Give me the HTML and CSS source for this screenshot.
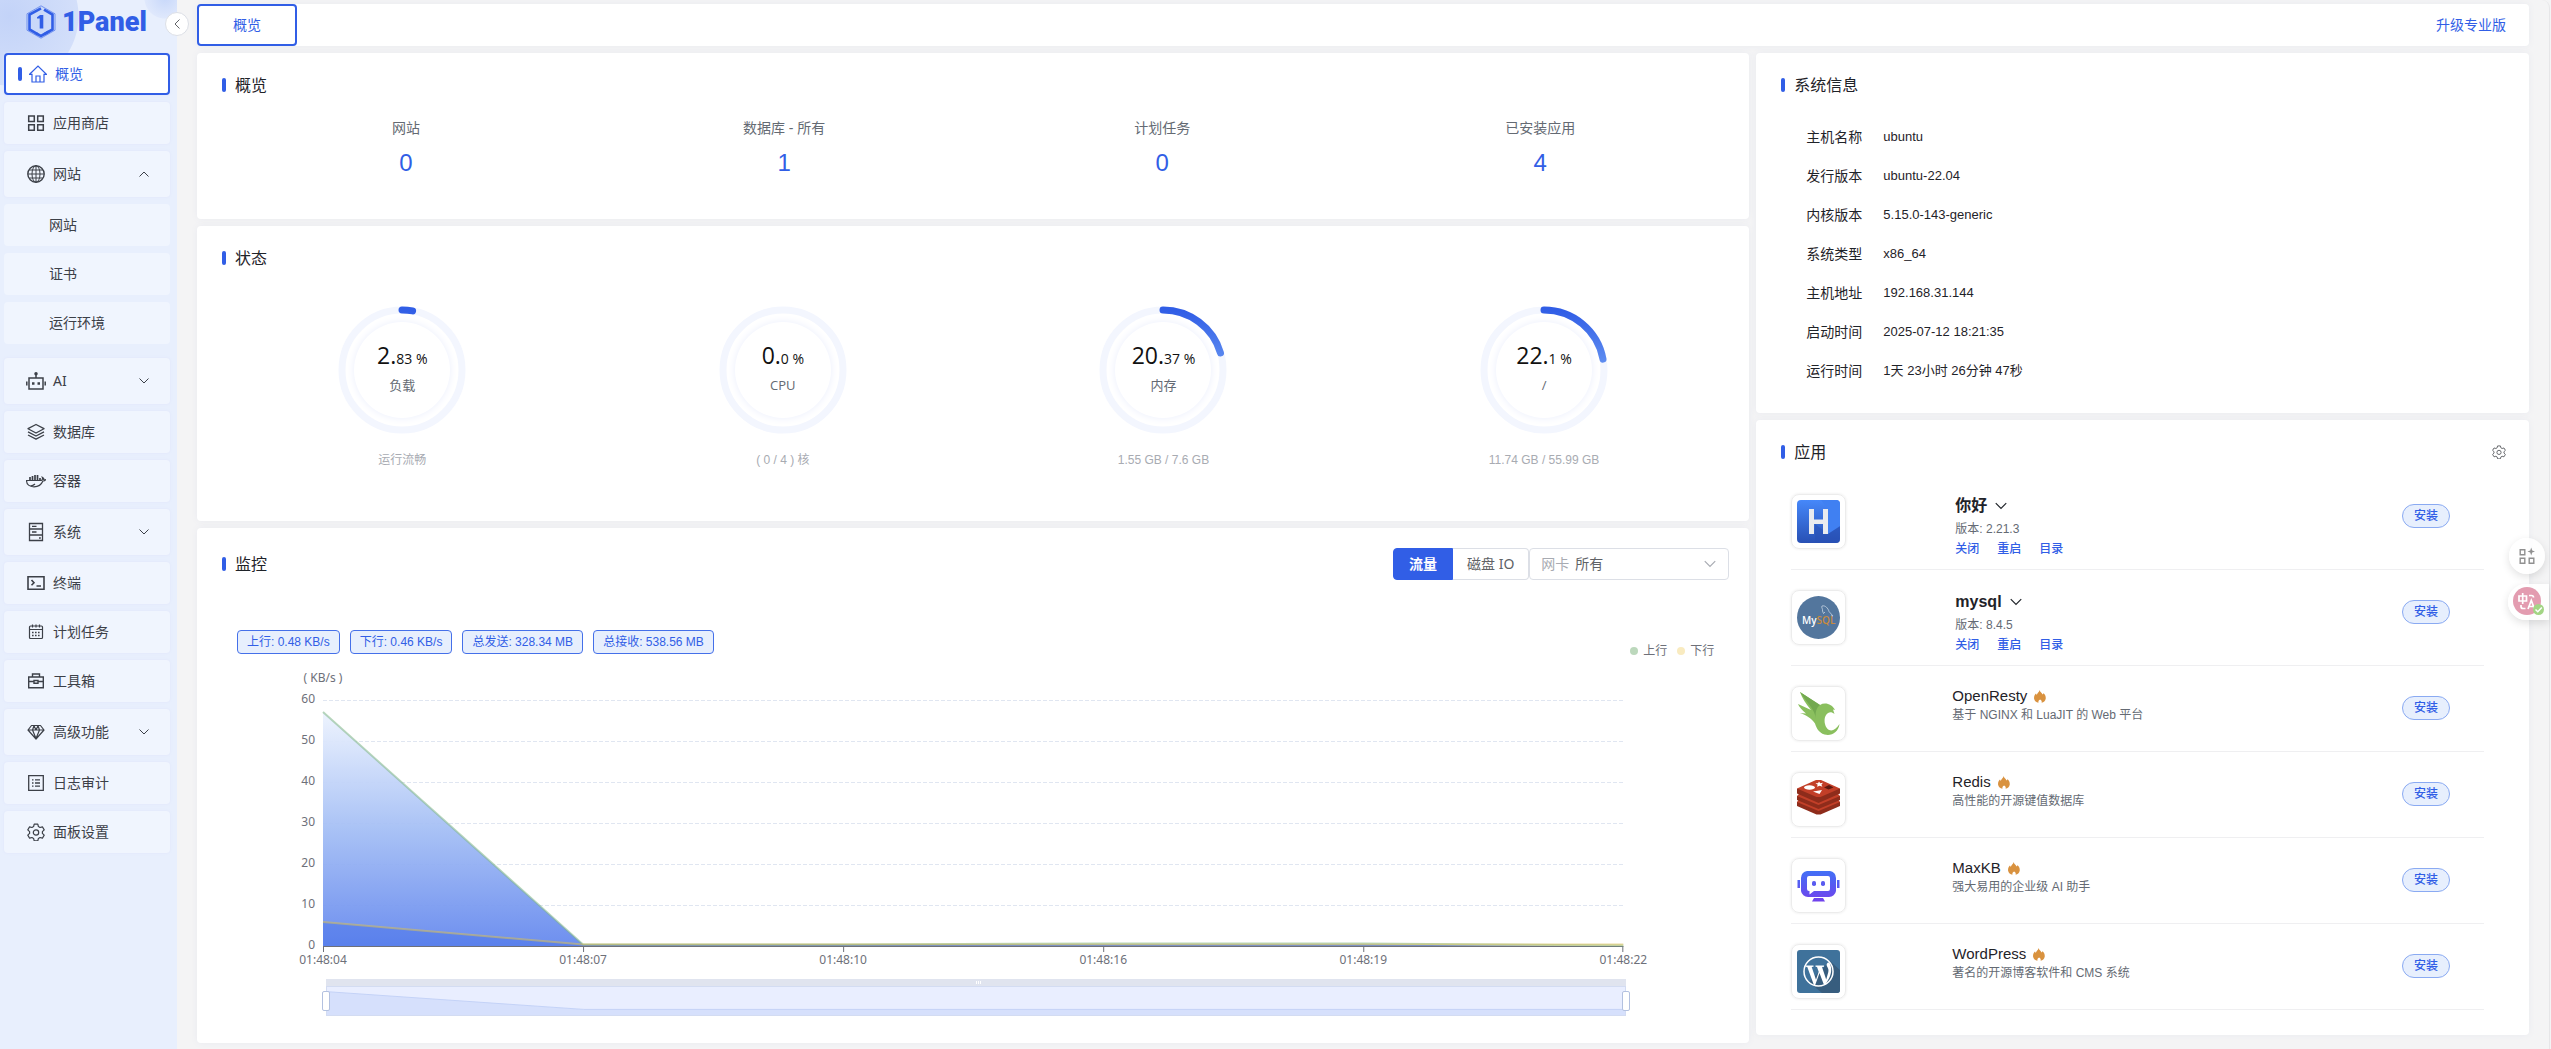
FILE: index.html
```html
<!DOCTYPE html>
<html lang="zh-CN">
<head>
  <meta charset="UTF-8" />
  <title>1Panel</title>
  <link rel="stylesheet" href="styles.css">
</head>
<body>
  <svg class="sprite" xmlns="http://www.w3.org/2000/svg">
    <symbol id="down" viewBox="0 0 12 12"><path d="M1.500 3.500 6 8l4.500-4.500" fill="none" stroke="currentColor"/></symbol>
    <symbol id="gear" viewBox="0 0 18 18"><path d="M7.200 1.200h3.600l.6 2.400 1.600.9 2.400-.7 1.800 3.100-1.800 1.700v1.800l1.800 1.700-1.800 3.100-2.400-.7-1.600.9-.6 2.400H7.200l-.6-2.400-1.600-.9-2.400.7-1.800-3.100 1.800-1.700V8.600L.8 6.900l1.800-3.100 2.400.7 1.600-.9z" fill="none" stroke="currentColor" stroke-width="1.200" stroke-linejoin="round"/><circle cx="9" cy="9.500" r="2.700" fill="none" stroke="currentColor" stroke-width="1.200"/></symbol>
    <symbol id="fire" viewBox="0 0 12 13"><path d="M5.600 0c.2 2 2.300 2.400 2.900 4.600l1.100-1.400C11.200 4.600 12 6.600 11.700 8.800c-.4 2.200-2 3.600-4.100 3.900.4-1.300 0-2.300-1.500-3.200-1.500.9-2 1.900-1.600 3.200C2.200 12.300.5 10.900.1 8.700-.2 6.500.8 4.800 2 3.600l.8 1.300C3.100 3 5.300 2.200 5.600 0z" fill="#d9923f"/></symbol>
  </svg>

  <aside class="sidebar">
    <a class="logo" href="#">
      <svg width="30" height="34" viewBox="0 0 30 34" fill="none" stroke="#315ee6">
        <path d="M15 .8 29 8.800v16.400l-14 8-14-8V8.800z" stroke-width=".8" opacity=".7"/>
        <path d="m18 4.600 8.500 5v14.800L18 29.400M12 29.400l-8.500-5V9.600L15 3.300" stroke-width="2.600"/>
        <path d="M11 12.200 14 10h3.300v13.500h-3.600V13.500H11z" fill="#315ee6" stroke="none"/>
        <path d="m10 28.300 5 2.700 8-4.600" stroke-width="2.600"/>
      </svg>
      <span>1Panel</span>
    </a>
    <nav class="menu">
      <a class="item active" href="#"><i class="bar"></i>
        <svg width="18" height="18" viewBox="0 0 18 18" fill="none" stroke="currentColor" stroke-width="1.200"><path d="M.6 9.300 9 1l8.400 8.300H15V17H3V9.300zM7 17v-6h4v6"/></svg>概览</a>
      <a class="item" href="#"><svg width="18" height="18" viewBox="0 0 18 18" fill="none" stroke="currentColor" stroke-width="1.500"><path d="M1.700 2h5.600v5.500H1.700zM10.700 2h5.600v5.500h-5.600zM1.700 10.700h5.600v5.500H1.700zM10.700 10.700h5.600v5.500h-5.600z"/></svg>应用商店</a>
      <a class="item parent" href="#"><svg width="18" height="18" viewBox="0 0 18 18" fill="none" stroke="currentColor"><circle cx="9" cy="9" r="8.200" stroke-width="1.400"/><ellipse cx="9" cy="9" rx="4" ry="8.200"/><path d="M9 1v16M1 9h16M2.200 5h13.600M2.200 13h13.600"/></svg>网站<svg class="arrow up" width="12" height="12"><use href="#down"/></svg></a>
      <div class="submenu">
        <a class="item" href="#">网站</a>
        <a class="item" href="#">证书</a>
        <a class="item" href="#">运行环境</a>
      </div>
      <a class="item parent" href="#"><svg width="20" height="18" viewBox="0 0 20 18" fill="none" stroke="currentColor" stroke-width="1.500"><path d="M3 6h14v11H3zM10 6V1.500M.8 9.500v4M19.200 9.500v4"/><circle cx="10" cy="1.800" r="1" fill="currentColor"/><path d="M6 11.500h2.500M11.500 11.500H14" stroke-width="2.400"/></svg>AI<svg class="arrow" width="12" height="12"><use href="#down"/></svg></a>
      <a class="item" href="#"><svg width="18" height="18" viewBox="0 0 18 18" fill="none" stroke="currentColor" stroke-width="1.300" stroke-linejoin="round"><path d="m9 1.500 8 4.200-8 4.300-8-4.300zM1 8.800l8 4.200 8-4.200M1 12l8 4.200 8-4.200"/></svg>数据库</a>
      <a class="item" href="#"><svg width="20" height="18" viewBox="0 0 20 18" fill="none" stroke="currentColor"><path d="M.6 8.500h14.800c1.200-.7 1.400-2 .9-3.300 1.200.5 1.500 1.600 1.400 2.100.9-.1 1.600 0 2 .4-.7 1-1.700 1.400-2.800 1.300-1.600 3.800-4.500 5.800-8.900 5.800C3.500 14.800.4 12.500.6 8.500zM4 14c2.500-.1 4-.9 5-2" stroke-width="1.200"/><path d="M4 5v3M6.500 4v4M9 3v5M11.500 3v5M14 6v2" stroke-width="1.700"/></svg>容器</a>
      <a class="item parent" href="#"><svg width="18" height="20" viewBox="0 0 18 20" fill="none" stroke="currentColor" stroke-width="1.300"><path d="M2.500 1.500h13v17h-13zM2.500 7h13M2.500 13h13M5 4.300h4.500M5 10h4.500M12 16h1.800"/></svg>系统<svg class="arrow" width="12" height="12"><use href="#down"/></svg></a>
      <a class="item" href="#"><svg width="18" height="18" viewBox="0 0 18 18" fill="none" stroke="currentColor" stroke-width="1.600"><path d="M1 2.700h16v12.600H1zM4.500 6 7 8.700l-2.500 2.600M9.500 12H14"/></svg>终端</a>
      <a class="item" href="#"><svg width="18" height="18" viewBox="0 0 18 18" fill="none" stroke="currentColor" stroke-width="1.200"><rect x="2.500" y="3" width="13" height="12.500" rx="1"/><path d="M2.500 6.500h13M5.500 1.500v3M9 1.500v3M12.500 1.500v3"/><path d="M5 9.500h8.500M5 12.500h8.500" stroke-width="1.500" stroke-dasharray="1.600 1.400"/></svg>计划任务</a>
      <a class="item" href="#"><svg width="18" height="18" viewBox="0 0 18 18" fill="none" stroke="currentColor" stroke-width="1.400"><path d="M1.700 5h14.600v10.800H1.700zM5.500 5V2h7v3M1.700 9.500H7M11 9.500h5.300M7 8.500h4v2.700H7z"/></svg>工具箱</a>
      <a class="item parent" href="#"><svg width="18" height="18" viewBox="0 0 18 18" fill="none" stroke="currentColor" stroke-width="1.200" stroke-linejoin="round"><path d="M4.500 2.500h9L17 7l-8 9L1 7zM1 7h16M5.500 7 9 15.500 12.500 7M5.500 7l1.500-4.300L9 7l2-4.300L12.500 7"/></svg>高级功能<svg class="arrow" width="12" height="12"><use href="#down"/></svg></a>
      <a class="item" href="#"><svg width="18" height="18" viewBox="0 0 18 18" fill="none" stroke="currentColor" stroke-width="1.300"><path d="M1.700 1.700h14.600v14.600H1.700zM5 5.800h1.500M8 5.800h5M5 9h1.500M8 9h5M5 12.200h1.500M8 12.200h5"/></svg>日志审计</a>
      <a class="item" href="#"><svg width="18" height="18"><use href="#gear"/></svg>面板设置</a>
    </nav>
    <button class="collapse" aria-label="收起"><svg width="12" height="12"><use href="#down"/></svg></button>
  </aside>

  <main>
    <header class="topbar">
      <a class="tab" href="#">概览</a>
      <a class="upgrade" href="#">升级专业版</a>
    </header>

    <div class="row">
      <div class="col wide">
        <section class="card overview">
          <h2>概览</h2>
          <div class="stats">
            <div><span>网站</span><a href="#">0</a></div>
            <div><span>数据库 - 所有</span><a href="#">1</a></div>
            <div><span>计划任务</span><a href="#">0</a></div>
            <div><span>已安装应用</span><a href="#">4</a></div>
          </div>
        </section>

        <section class="card status">
          <h2>状态</h2>
          <svg class="sprite">
            <defs><linearGradient id="arc" x1="0" y1="5" x2="0" y2="70" gradientUnits="userSpaceOnUse"><stop offset="0" stop-color="#315ee6"/><stop offset="1" stop-color="#6a99f3"/></linearGradient></defs>
          </svg>
          <div class="gauges">
            <div class="gauge">
              <div class="dial">
                <svg width="128" height="128" viewBox="0 0 128 128"><circle class="track" cx="64" cy="64" r="60"/><path class="arc" d="M64 4A60 60 0 0 1 74.600 4.900"/></svg>
                <div class="inner"><p class="value">2.<small>83 %</small></p><p class="name">负载</p></div>
              </div>
              <p class="note">运行流畅</p>
            </div>
            <div class="gauge">
              <div class="dial">
                <svg width="128" height="128" viewBox="0 0 128 128"><circle class="track" cx="64" cy="64" r="60"/></svg>
                <div class="inner"><p class="value">0.<small>0 %</small></p><p class="name">CPU</p></div>
              </div>
              <p class="note">( 0 / 4 ) 核</p>
            </div>
            <div class="gauge">
              <div class="dial">
                <svg width="128" height="128" viewBox="0 0 128 128"><circle class="track" cx="64" cy="64" r="60"/><path class="arc" d="M64 4A60 60 0 0 1 121.500 46.900"/></svg>
                <div class="inner"><p class="value">20.<small>37 %</small></p><p class="name">内存</p></div>
              </div>
              <p class="note">1.55 GB / 7.6 GB</p>
            </div>
            <div class="gauge">
              <div class="dial">
                <svg width="128" height="128" viewBox="0 0 128 128"><circle class="track" cx="64" cy="64" r="60"/><path class="arc" d="M64 4A60 60 0 0 1 123 53.100"/></svg>
                <div class="inner"><p class="value">22.<small>1 %</small></p><p class="name">/</p></div>
              </div>
              <p class="note">11.74 GB / 55.99 GB</p>
            </div>
          </div>
        </section>

        <section class="card monitor">
          <div class="card-head">
            <h2>监控</h2>
            <div class="tools">
              <button class="seg on">流量</button><button class="seg">磁盘 IO</button>
              <div class="picker">
                <label for="nic">网卡</label>
                <select id="nic"><option>所有</option></select>
                <svg width="14" height="14"><use href="#down"/></svg>
              </div>
            </div>
          </div>
          <div class="summary">
            <div class="tags">
              <span class="tag">上行: 0.48 KB/s</span>
              <span class="tag">下行: 0.46 KB/s</span>
              <span class="tag">总发送: 328.34 MB</span>
              <span class="tag">总接收: 538.56 MB</span>
            </div>
            <div class="legend"><span class="up">上行</span><span class="dn">下行</span></div>
          </div>
          <div class="chart">
            <p class="unit">( KB/s )</p>
            <div class="plot">
              <div class="ylabels"><span>60</span><span>50</span><span>40</span><span>30</span><span>20</span><span>10</span><span>0</span></div>
              <svg viewBox="0 0 1300 252" preserveAspectRatio="none">
                <defs><linearGradient id="area" x1="0" y1="12" x2="0" y2="246" gradientUnits="userSpaceOnUse"><stop offset="0" stop-color="#edf3fe"/><stop offset=".5" stop-color="#a5bff5"/><stop offset="1" stop-color="#6689ee"/></linearGradient></defs>
                <path class="grid" d="M0 .5H1300M0 41.500H1300M0 82.500H1300M0 123.500H1300M0 164.500H1300M0 205.500H1300"/>
                <path d="M0 12 260 244.500H1040L1300 246.500H0z" fill="url(#area)" opacity=".95"/>
                <path d="M0 222 260 244.500H1040L1300 246.500H0z" fill="#3f6be8" opacity=".4"/>
                <path class="axis" d="M0 246.500H1300M.5 246V252M260.500 246V252M520.500 246V252M780.500 246V252M1040.500 246V252M1299.500 246V252"/>
                <path class="line" d="M0 12 260 244.500 520 244.500 780 243.500 1040 243.500 1300 245.500" stroke="#7fb686"/>
                <path class="line" d="M0 222 260 244.500 520 244.500 1300 244.500" stroke="#d9c15a"/>
              </svg>
            </div>
            <div class="xlabels"><span>01:48:04</span><span>01:48:07</span><span>01:48:10</span><span>01:48:16</span><span>01:48:19</span><span>01:48:22</span></div>
            <div class="zoombar">
              <i class="grip"></i>
              <svg viewBox="0 0 1300 30" preserveAspectRatio="none"><path d="M0 5 257 24H1300V30H0z" fill="#d6e0fc"/><path d="M0 5 257 24H1300" fill="none" stroke="#c3d1f7"/></svg>
              <i class="handle left"></i><i class="handle right"></i>
            </div>
          </div>
        </section>
      </div>

      <div class="col narrow">
        <section class="card system">
          <h2>系统信息</h2>
          <table>
            <tr><th>主机名称</th><td>ubuntu</td></tr>
            <tr><th>发行版本</th><td>ubuntu-22.04</td></tr>
            <tr><th>内核版本</th><td>5.15.0-143-generic</td></tr>
            <tr><th>系统类型</th><td>x86_64</td></tr>
            <tr><th>主机地址</th><td>192.168.31.144</td></tr>
            <tr><th>启动时间</th><td>2025-07-12 18:21:35</td></tr>
            <tr><th>运行时间</th><td>1天 23小时 26分钟 47秒</td></tr>
          </table>
        </section>

        <section class="card apps">
          <div class="card-head">
            <h2>应用</h2>
            <button class="config" aria-label="设置"><svg width="14" height="14"><use href="#gear"/></svg></button>
          </div>
          <ul>
            <li class="installed">
              <div class="app-icon">
                <svg width="43" height="43" viewBox="0 0 43 43">
                  <defs><linearGradient id="halo" x1="0" y1="0" x2="0" y2="1"><stop offset="0" stop-color="#4688fa"/><stop offset="1" stop-color="#2850b4"/></linearGradient></defs>
                  <rect width="43" height="43" rx="4" fill="url(#halo)"/>
                  <path d="M31 9V34L43 26V4a4 4 0 0 0-4-4H24z" fill="#4080f2"/>
                  <path d="M18 24 31 34 43 26.500V39a4 4 0 0 1-4 4H18z" fill="#2850b4" opacity=".55"/>
                  <path d="M12 9h5v10.500h9V9h5v25h-5V24h-9v10h-5z" fill="#e9ebef"/>
                </svg>
              </div>
              <div class="app-text">
                <h3>你好<svg width="14" height="14"><use href="#down"/></svg></h3>
                <p>版本: 2.21.3</p>
                <div class="links"><a href="#">关闭</a><a href="#">重启</a><a href="#">目录</a></div>
              </div>
              <button class="install">安装</button>
            </li>
            <li class="installed">
              <div class="app-icon">
                <svg width="43" height="43" viewBox="0 0 43 43">
                  <circle cx="21.500" cy="21.500" r="21.500" fill="#53769d"/>
                  <path d="M25 10c3-1 6 2 7 5.500l4 4.500-2-.2M25 10c-1 1.500 1 2.500.5 5l1 2.500 1.500-1.500" fill="none" stroke="#c5d3e2" stroke-width=".8"/>
                  <text x="5" y="28" class="mysql-text">My<tspan fill="#c98a3d">SQL</tspan></text>
                </svg>
              </div>
              <div class="app-text">
                <h3>mysql<svg width="14" height="14"><use href="#down"/></svg></h3>
                <p>版本: 8.4.5</p>
                <div class="links"><a href="#">关闭</a><a href="#">重启</a><a href="#">目录</a></div>
              </div>
              <button class="install">安装</button>
            </li>
            <li>
              <div class="app-icon">
                <svg width="43" height="43" viewBox="0 0 43 43">
                  <path d="M3 0 23 13c5-3 12-1 15 5l-2-.5 1.500 4.500c-6-5-11.500 2-9.500 10 2 8 9 9 14.500 0-1 8-8 12.500-15 10.500-6-2-8-6.500-9.500-11C14 26 9 23 3 21l6 .5C5 18 2 15 1 12l13 6C9 12 5 6 3 0z" fill="#8abf5e"/>
                  <path d="M3 0l20 13c-4 3-5 8-4 14C18 17 9 10 3 0z" fill="#73a950"/>
                </svg>
              </div>
              <div class="app-text">
                <h4>OpenResty<svg width="12" height="13"><use href="#fire"/></svg></h4>
                <p>基于 NGINX 和 LuaJIT 的 Web 平台</p>
              </div>
              <button class="install">安装</button>
            </li>
            <li>
              <div class="app-icon">
                <svg width="43" height="43" viewBox="0 0 43 43">
                  <path d="M0 24v4l19.500 8.500h4L43 28v-4z" fill="#8e2c1b"/><path d="M0 24l21.500 9L43 24l-3-4H3z" fill="#c23f28"/>
                  <path d="M0 18v4l21.500 9L43 22v-4z" fill="#8e2c1b"/><path d="M0 18l21.500 9L43 18l-3-3H3z" fill="#c23f28"/>
                  <path d="M0 10.500v5L21.500 25 43 15.500v-5z" fill="#8e2c1b"/><path d="M0 10.500 19 2h5l19 8.500L23.500 19h-4z" fill="#c23f28"/>
                  <ellipse cx="12.500" cy="9.500" rx="5.500" ry="2.200" fill="#fff"/>
                  <path d="m22 3.500 1.200 1.700 2.800-.4-1.600 2 1 2-2.700-1-2.700 1 .7-2L18.500 5l2.500.2zM16 13.500l9-1.500-2.500 4z" fill="#fff"/><path d="m27 9.500 5-2.500 4.500 2.500-5 2z" fill="#5e190f"/>
                </svg>
              </div>
              <div class="app-text">
                <h4>Redis<svg width="12" height="13"><use href="#fire"/></svg></h4>
                <p>高性能的开源键值数据库</p>
              </div>
              <button class="install">安装</button>
            </li>
            <li>
              <div class="app-icon">
                <svg width="43" height="43" viewBox="0 0 43 43">
                  <defs><linearGradient id="kb" x1="0" y1="0" x2="0" y2="1"><stop offset="0" stop-color="#4270f6"/><stop offset="1" stop-color="#7142ec"/></linearGradient></defs>
                  <path d="M10 7h23a7 7 0 0 1 6 7v13a7 7 0 0 1-7 6H11a7 7 0 0 1-7-6V14a7 7 0 0 1 6-7zM.5 16H3v8H.5zM40 16h2.500v8H40zM17 34h9l2 3.500H15z" fill="url(#kb)"/>
                  <path d="M12 12h19a2 2 0 0 1 2 2v11a2 2 0 0 1-2 2H17L12.500 30.500V27H12a2 2 0 0 1-2-2V14a2 2 0 0 1 2-2z" fill="#fff"/>
                  <rect x="15" y="17" width="4" height="5" rx="1.800" fill="#5a5cf0"/><rect x="24" y="17" width="4" height="5" rx="1.800" fill="#5a5cf0"/>
                </svg>
              </div>
              <div class="app-text">
                <h4>MaxKB<svg width="12" height="13"><use href="#fire"/></svg></h4>
                <p>强大易用的企业级 AI 助手</p>
              </div>
              <button class="install">安装</button>
            </li>
            <li>
              <div class="app-icon">
                <svg width="43" height="43" viewBox="0 0 43 43">
                  <rect width="43" height="43" rx="3" fill="#3f729b"/>
                  <path d="M33 11 43 20v20a3 3 0 0 1-3 3H25L12 32z" fill="#375d7e"/>
                  <circle cx="21.500" cy="21.500" r="14.500" fill="none" stroke="#fff" stroke-width="1.500"/>
                  <path d="M8.500 15.500h8v1.300l-1.800.3 4.300 12.700 2.700-8-1.700-4.700-1.500-.3v-1.300h8.500v1.300l-2 .3 4.200 12.500 2-7c1-3.500-.8-5-1.500-7-.5-2 1-3.500 2.500-3 2.500 4 3 9 0 15.500l-4 7h-1.200l-4.500-12-4.300 12h-1.300L10.300 17l-1.800-.2z" fill="#fff"/>
                </svg>
              </div>
              <div class="app-text">
                <h4>WordPress<svg width="12" height="13"><use href="#fire"/></svg></h4>
                <p>著名的开源博客软件和 CMS 系统</p>
              </div>
              <button class="install">安装</button>
            </li>
          </ul>
        </section>
      </div>
    </div>
  </main>

  <div class="floating">
    <button class="quick" aria-label="工具"><svg width="16" height="18" viewBox="0 0 16 18" fill="none" stroke="#909090" stroke-width="1.400"><path d="M1.200 2.700h4.600v5H1.200zM1.200 11.300h4.600v5H1.200zM10.200 11.300h4.600v5h-4.600z"/><path d="m12.200.5 1 3 2.800 1-2.800 1-1 3-1-3-2.700-1 2.700-1z" fill="#909090" stroke="none"/></svg></button>
    <button class="translate" aria-label="翻译">
      <svg width="32" height="30" viewBox="0 0 32 30">
        <circle cx="14" cy="14" r="14" fill="#e39cb0"/>
        <path d="M6 9h7.500v5H6zM9.700 6v11M16 8.500h2.500a2 2 0 0 1 2 2M8 18v1.500a2 2 0 0 0 2 2h2.500M15 22l3.300-8.500L21.500 22M16 19.500h4.500" fill="none" stroke="#fff" stroke-width="1.700"/>
        <circle cx="25.500" cy="22.500" r="5.500" fill="#a3d585"/><path d="m22.500 22.500 2.300 2.300 4-4.200" fill="none" stroke="#fff" stroke-width="1.500"/>
      </svg>
    </button>
  </div>
</body>
</html>
```
FILE: styles.css
```css
* {
  box-sizing: border-box;
}
body {
  margin: 0;
  display: flex;
  min-height: 100vh;
  background: #f4f4f5;
  color: #1f2329;
  font-family: "Liberation Sans", "Noto Sans CJK SC", sans-serif;
  font-size: 14px;
  line-height: 20px;
}
a {
  color: #315ee6;
  text-decoration: none;
}
button {
  font: inherit;
  cursor: pointer;
}
h2, h3, h4, p, ul {
  margin: 0;
  padding: 0;
}
.sprite {
  position: absolute;
  width: 0;
  height: 0;
}

/* sidebar */
.sidebar {
  position: relative;
  flex: 0 0 177px;
  background:
    radial-gradient(circle at 165px -2px, #c8d8fa 0, #dfe8fc 20px, transparent 21px),
    radial-gradient(circle at 9px 16px, #c3d3f8 0, #d3dffa 69px, transparent 70px),
    #e8effd;
}
.logo {
  display: flex;
  align-items: center;
  gap: 6px;
  height: 43px;
  padding-left: 26px;
  font-family: Roboto, sans-serif;
  font-size: 27px;
  font-weight: 900;
}
.menu {
  display: flex;
  flex-direction: column;
  gap: 7px;
  padding: 10px 7px 10px 4px;
}
.item {
  display: flex;
  align-items: center;
  gap: 8px;
  height: 42px;
  padding: 0 20px 0 23px;
  background: #f0f5fe;
  border-radius: 4px;
  box-shadow: 0 0 3px #dfe5fa;
  color: #3c4048;
  font-family: "Noto Sans", "Noto Sans CJK SC", sans-serif;
}
.item svg[width="20"] {
  margin: 0 -1px;
}
.parent {
  height: 46px;
}
.active {
  padding-left: 12px;
  border: 2px solid #315ee6;
  background: #fff;
  color: #315ee6;
}
.bar {
  width: 4px;
  height: 14px;
  border-radius: 2px;
  background: #315ee6;
}
.active .bar {
  margin-right: -1px;
}
.arrow {
  margin-left: auto;
}
.arrow.up {
  transform: rotate(180deg);
}
.submenu {
  display: flex;
  flex-direction: column;
  gap: 7px;
  padding-bottom: 7px;
}
.submenu .item {
  padding-left: 45px;
  box-shadow: none;
}
.collapse {
  position: absolute;
  top: 12px;
  right: -12px;
  width: 24px;
  height: 24px;
  padding: 5px;
  border: 1px solid #dcdfe6;
  border-radius: 50%;
  background: #fff;
  color: #606266;
}
.collapse svg {
  display: block;
  transform: rotate(90deg);
}

/* main */
main {
  flex: 1;
  min-width: 0;
  margin-right: 1px;
  padding: 4px 20px 6px;
  border-right: 1px solid #e6e6e8;
  border-radius: 0 8px 0 0;
}
.topbar {
  display: flex;
  align-items: center;
  justify-content: space-between;
  height: 42px;
  padding-right: 23px;
  background: #fff;
  border-radius: 4px;
  box-shadow: 0 0 6px #e9eaf0;
}
.tab {
  width: 100px;
  height: 42px;
  border: 2px solid #315ee6;
  border-radius: 4px;
  line-height: 38px;
  text-align: center;
}
.row {
  display: flex;
  align-items: flex-start;
  margin: 7px -7px 0 0;
}
.col {
  display: flex;
  flex-direction: column;
  gap: 7px;
  min-width: 0;
  padding-right: 7px;
}
.wide {
  width: calc(100% * 2 / 3);
}
.narrow {
  width: calc(100% / 3);
}
.card {
  padding: 20px;
  background: #fff;
  border-radius: 4px;
  box-shadow: 0 0 6px #e9eaf0;
}
.card-head {
  display: flex;
  align-items: center;
  justify-content: space-between;
}
h2 {
  display: flex;
  align-items: center;
  gap: 9px;
  height: 24px;
  padding: 2px 0 0 5px;
  font-size: 16px;
  font-weight: 400;
}
h2::before {
  content: "";
  width: 4px;
  height: 14px;
  margin-bottom: 2px;
  border-radius: 2px;
  background: #315ee6;
}

.overview {
  padding-bottom: 40px;
}
.stats, .gauges {
  display: grid;
  grid-template-columns: repeat(4, 1fr);
  text-align: center;
}
.stats {
  margin-top: 21px;
}
.stats span {
  display: block;
  margin-bottom: 9px;
  color: #646a73;
}
.stats a {
  display: block;
  font-size: 24px;
  line-height: 32px;
}

.status {
  padding-bottom: 51px;
}
.gauges {
  margin: 36px -5px 0;
}
.dial {
  display: grid;
  place-items: center;
}
.dial > * {
  grid-area: 1 / 1;
}
.track, .arc {
  fill: none;
  stroke: #f3f6fe;
  stroke-width: 7;
}
.arc {
  stroke: url(#arc);
  stroke-linecap: round;
}
.inner {
  width: 96px;
  height: 96px;
  padding-top: 17px;
  border-radius: 50%;
  box-shadow: 0 0 7px 1px #eff2fd;
  font-family: "Open Sans", "Noto Sans CJK SC", sans-serif;
}
.value {
  font-size: 23px;
  line-height: 32px;
  color: #111;
}
.value small {
  font-size: 14px;
}
.name {
  font-size: 13px;
  color: #646a73;
}
.note {
  margin-top: 16px;
  font-size: 12px;
  color: #a8abb2;
}

/* monitor */
.monitor {
  padding-bottom: 27px;
}
.tools {
  display: flex;
  height: 32px;
  font-family: "Noto Sans", "Noto Sans CJK SC", sans-serif;
}
.seg {
  padding: 0 14px;
  border: 1px solid #dcdfe6;
  border-left: 0;
  border-radius: 0 4px 4px 0;
  background: #fff;
  color: #606266;
}
.seg.on {
  padding: 0 15px;
  border: 1px solid #315ee6;
  border-radius: 4px 0 0 4px;
  background: #315ee6;
  color: #fff;
  font-weight: 700;
}
.picker {
  position: relative;
  display: flex;
  align-items: center;
  gap: 6px;
  width: 200px;
  padding: 0 11px;
  border: 1px solid #dcdfe6;
  border-radius: 4px;
  color: #a8abb2;
}
.picker select {
  flex: 1;
  appearance: none;
  border: 0;
  padding: 0;
  background: none;
  color: #606266;
  font: inherit;
}
.summary {
  display: flex;
  justify-content: space-between;
  height: 30px;
  margin-top: 50px;
  padding: 0 15px 0 20px;
}
.tags {
  display: flex;
  gap: 10px;
}
.tag {
  height: 24px;
  padding: 0 9px;
  border: 1px solid #4570e9;
  border-radius: 4px;
  background: #e7effd;
  color: #315ee6;
  font-size: 12px;
  line-height: 22px;
}
.legend {
  display: flex;
  align-items: center;
  align-self: flex-end;
  gap: 10px;
  height: 18px;
  font-size: 12px;
  color: #6e7079;
}
.legend span {
  display: flex;
  align-items: center;
  gap: 5px;
}
.legend span::before {
  content: "";
  width: 8px;
  height: 8px;
  border-radius: 50%;
  background: #bcd8bc;
}
.legend .dn::before {
  background: #f9ebc0;
}
.chart {
  margin: 10px 106px 0;
  color: #6e7079;
  font-family: "Noto Sans", sans-serif;
  font-size: 12px;
  line-height: 16px;
}
.unit {
  width: 60px;
  margin: 0 0 14px -30px;
  text-align: center;
}
.plot {
  display: flex;
  height: 252px;
}
.plot svg {
  flex: 1;
  min-width: 0;
  height: 252px;
  overflow: visible;
}
.ylabels {
  display: flex;
  flex-direction: column;
  justify-content: space-between;
  width: 30px;
  height: 262px;
  margin: -9px 8px 0 -38px;
  text-align: right;
}
.grid, .axis, .line {
  fill: none;
  vector-effect: non-scaling-stroke;
}
.grid {
  stroke: #e0e6f1;
  stroke-dasharray: 4 2;
}
.axis {
  stroke: #6e7079;
}
.line {
  stroke-width: 2;
  opacity: .55;
}
.xlabels {
  display: flex;
  justify-content: space-between;
  margin: 0 -30px;
}
.xlabels span {
  width: 60px;
  text-align: center;
}
.zoombar {
  position: relative;
  margin: 11px -3px 0 3px;
  border-top: 7px solid #e0e4ef;
  background: #e9eeff;
}
.zoombar svg {
  display: block;
  width: 100%;
  height: 30px;
  border: 1px solid #d3dcf2;
}
.grip {
  position: absolute;
  top: -5px;
  left: 50%;
  width: 5px;
  height: 3px;
  background: repeating-linear-gradient(90deg, #fff 0 1px, transparent 1px 2px);
}
.handle {
  position: absolute;
  top: 5px;
  width: 8px;
  height: 20px;
  border: 1px solid #b3c1e0;
  border-radius: 2px;
  background: #fff;
}
.handle.left {
  left: -4px;
}
.handle.right {
  right: -4px;
}

/* system info */
.system {
  padding-bottom: 23px;
}
table {
  margin: 20px 0 0 30px;
  border-collapse: collapse;
}
th, td {
  height: 39px;
  padding: 0;
  text-align: left;
  font-weight: 400;
}
th {
  width: 77px;
}
td {
  font-size: 13px;
}

/* apps */
.apps {
  padding-bottom: 25px;
}
.config {
  display: flex;
  padding: 0;
  margin-right: 3px;
  border: 0;
  background: none;
  color: #606266;
}
.apps ul {
  margin: 10px 25px 0 15px;
  list-style: none;
}
.apps li {
  display: flex;
  align-items: flex-start;
  height: 86px;
  padding-top: 20px;
  border-bottom: 1px solid #efeff1;
}
.apps .installed {
  height: 96px;
}
.app-icon {
  display: flex;
  align-items: center;
  justify-content: center;
  width: 55px;
  height: 55px;
  margin-right: 106px;
  border: 1px solid #ececec;
  border-radius: 8px;
  box-shadow: 0 0 3px #e8e8e8;
}
.mysql-text {
  fill: #fff;
  font: 600 10px "Open Sans", sans-serif;
}
.app-text {
  flex: 1;
  font-size: 12px;
}
.installed .app-text {
  padding-left: 3px;
}
.app-text p {
  color: #646a73;
  line-height: 18px;
}
.app-text h3 + p {
  margin-top: 1px;
  line-height: 20px;
}
h3, h4 {
  display: flex;
  align-items: center;
  gap: 7px;
  font-size: 16px;
  line-height: 24px;
}
h4 {
  font-size: 15px;
  font-weight: 400;
  line-height: 20px;
}
.links {
  display: flex;
  gap: 18px;
  font-weight: 500;
}
.install {
  width: 48px;
  height: 24px;
  margin: 10px 34px 0 0;
  padding: 0;
  border: 1px solid #8aaaf2;
  border-radius: 12px;
  background: #e7effd;
  color: #315ee6;
  font-size: 12px;
  font-weight: 500;
}

/* browser side buttons */
.floating {
  position: fixed;
  top: 538px;
  right: 2px;
  display: flex;
  flex-direction: column;
  gap: 10px;
}
.floating button {
  display: flex;
  align-items: center;
  justify-content: center;
  height: 36px;
  padding: 0;
  border: 0;
  background: rgba(255, 255, 255, .85);
  box-shadow: 0 3px 8px rgba(0, 0, 0, .12);
}
.quick {
  width: 36px;
  margin-left: 1px;
  border-radius: 50%;
}
.translate {
  width: 41px;
  border-radius: 18px 0 0 18px;
}
```
